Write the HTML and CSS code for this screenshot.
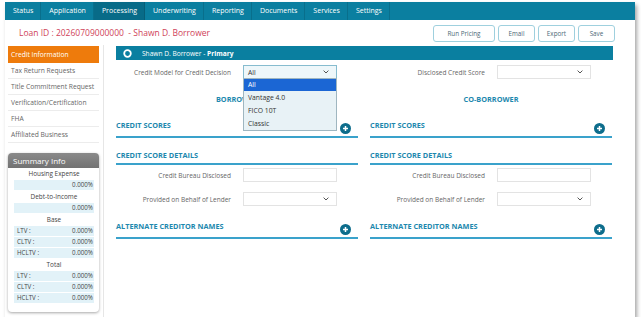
FILE: index.html
```html
<!DOCTYPE html>
<html lang="en">
    <head>
        <meta charset="UTF-8" />
        <title>Credit Information</title>
        <link rel="stylesheet" href="styles.css">
    </head>
    <body>
        <div class="window">
            <nav class="tabs">
                <a class="tab">Status</a>
                <a class="tab">Application</a>
                <a class="tab active">Processing</a>
                <a class="tab">Underwriting</a>
                <a class="tab">Reporting</a>
                <a class="tab">Documents</a>
                <a class="tab">Services</a>
                <a class="tab">Settings</a>
            </nav>
            <div class="topline">
                <div class="loan-id">Loan ID : 20260709000000&nbsp; - Shawn D. Borrower</div>
                <div class="actions">
                    <button class="btn btn-wide">Run Pricing</button>
                    <button class="btn">Email</button>
                    <button class="btn">Export</button>
                    <button class="btn">Save</button>
                </div>
            </div>
            <div class="content">
                <aside class="sidebar">
                    <ul class="menu">
                        <li class="current">Credit Information</li>
                        <li>Tax Return Requests</li>
                        <li>Title Commitment Request</li>
                        <li>Verification/Certification</li>
                        <li>FHA</li>
                        <li>Affiliated Business</li>
                    </ul>
                    <div class="summary">
                        <div class="summary-head">Summary Info</div>
                        <div class="summary-body">
                            <div class="s-title">Housing Expense</div>
                            <div class="s-row"><span></span><span>0.000%</span></div>
                            <div class="s-title">Debt-to-Income</div>
                            <div class="s-row"><span></span><span>0.000%</span></div>
                            <div class="s-title">Base</div>
                            <div class="s-row"><span>LTV :</span><span>0.000%</span></div>
                            <div class="s-row"><span>CLTV :</span><span>0.000%</span></div>
                            <div class="s-row"><span>HCLTV :</span><span>0.000%</span></div>
                            <div class="s-title">Total</div>
                            <div class="s-row"><span>LTV :</span><span>0.000%</span></div>
                            <div class="s-row"><span>CLTV :</span><span>0.000%</span></div>
                            <div class="s-row"><span>HCLTV :</span><span>0.000%</span></div>
                        </div>
                    </div>
                </aside>
                <main class="main">
                    <div class="borrower-bar">
                        <svg class="radio" width="9" height="9" viewBox="0 0 9 9"><circle cx="4.5" cy="4.5" r="3.3" fill="none" stroke="#fff" stroke-width="1.8"/></svg>
                        <span>Shawn D. Borrower - <b>Primary</b></span>
                    </div>
                    <div class="cols">
                        <div class="col">
                            <div class="field">
                                <div class="label">Credit Model for Credit Decision</div>
                                <div class="control open">
                                    <div class="select focus">
                                        <span>All</span>
                                        <svg width="6" height="4" viewBox="0 0 6 4"><path d="M0.6 0.6L3 3L5.4 0.6" fill="none" stroke="#555" stroke-width="1"/></svg>
                                    </div>
                                    <ul class="dropdown">
                                        <li class="hl">All</li>
                                        <li>Vantage 4.0</li>
                                        <li>FICO 10T</li>
                                        <li>Classic</li>
                                    </ul>
                                </div>
                            </div>
                            <div class="col-title">BORROWER</div>
                            <div class="sec-head with-icon">
                                <span>CREDIT SCORES</span>
                                <svg class="plus" width="11" height="11" viewBox="0 0 11 11"><circle cx="5.5" cy="5.5" r="5.5" fill="#0d6d8c"/><path d="M5.5 3v5M3 5.5h5" stroke="#fff" stroke-width="1.5"/></svg>
                            </div>
                            <div class="sec-head">
                                <span>CREDIT SCORE DETAILS</span>
                            </div>
                            <div class="fields">
                                <div class="field">
                                    <div class="label">Credit Bureau Disclosed</div>
                                    <div class="control"><div class="select"></div></div>
                                </div>
                                <div class="field">
                                    <div class="label">Provided on Behalf of Lender</div>
                                    <div class="control">
                                        <div class="select">
                                            <span></span>
                                            <svg width="6" height="4" viewBox="0 0 6 4"><path d="M0.6 0.6L3 3L5.4 0.6" fill="none" stroke="#555" stroke-width="1"/></svg>
                                        </div>
                                    </div>
                                </div>
                            </div>
                            <div class="sec-head with-icon alt">
                                <span>ALTERNATE CREDITOR NAMES</span>
                                <svg class="plus" width="11" height="11" viewBox="0 0 11 11"><circle cx="5.5" cy="5.5" r="5.5" fill="#0d6d8c"/><path d="M5.5 3v5M3 5.5h5" stroke="#fff" stroke-width="1.5"/></svg>
                            </div>
                        </div>
                        <div class="col">
                            <div class="field">
                                <div class="label">Disclosed Credit Score</div>
                                <div class="control">
                                    <div class="select">
                                        <span></span>
                                        <svg width="6" height="4" viewBox="0 0 6 4"><path d="M0.6 0.6L3 3L5.4 0.6" fill="none" stroke="#555" stroke-width="1"/></svg>
                                    </div>
                                </div>
                            </div>
                            <div class="col-title">CO-BORROWER</div>
                            <div class="sec-head with-icon">
                                <span>CREDIT SCORES</span>
                                <svg class="plus" width="11" height="11" viewBox="0 0 11 11"><circle cx="5.5" cy="5.5" r="5.5" fill="#0d6d8c"/><path d="M5.5 3v5M3 5.5h5" stroke="#fff" stroke-width="1.5"/></svg>
                            </div>
                            <div class="sec-head">
                                <span>CREDIT SCORE DETAILS</span>
                            </div>
                            <div class="fields">
                                <div class="field">
                                    <div class="label">Credit Bureau Disclosed</div>
                                    <div class="control"><div class="select"></div></div>
                                </div>
                                <div class="field">
                                    <div class="label">Provided on Behalf of Lender</div>
                                    <div class="control">
                                        <div class="select">
                                            <span></span>
                                            <svg width="6" height="4" viewBox="0 0 6 4"><path d="M0.6 0.6L3 3L5.4 0.6" fill="none" stroke="#555" stroke-width="1"/></svg>
                                        </div>
                                    </div>
                                </div>
                            </div>
                            <div class="sec-head with-icon alt">
                                <span>ALTERNATE CREDITOR NAMES</span>
                                <svg class="plus" width="11" height="11" viewBox="0 0 11 11"><circle cx="5.5" cy="5.5" r="5.5" fill="#0d6d8c"/><path d="M5.5 3v5M3 5.5h5" stroke="#fff" stroke-width="1.5"/></svg>
                            </div>
                        </div>
                    </div>
                </main>
            </div>
        </div>
    </body>
</html>
```
FILE: styles.css
```css
body {
    margin: 0;
    background-color: #fff;
    font-family: "Open Sans", "Liberation Sans", sans-serif;
}
.window {
    width: 630px;
    height: 315px;
    margin: 2px 0 0 5px;
    background-color: #fff;
    box-shadow: 2px 3px 4px rgba(0, 0, 0, 0.35);
    display: flex;
    flex-direction: column;
    overflow: hidden;
}
.tabs {
    display: flex;
    height: 18px;
    background-color: #0b7fa0;
}
.tab {
    padding: 0 7px 0 8px;
    line-height: 18px;
    font-size: 7px;
    color: #fff;
    border-right: 1px solid rgba(0, 0, 0, 0.12);
}
.tab.active {
    background-color: #086b88;
}
.topline {
    display: flex;
    justify-content: space-between;
    align-items: center;
    height: 25px;
    padding: 0 20px 0 14px;
}
.loan-id {
    font-size: 8.5px;
    color: #cf3f5a;
}
.actions {
    display: flex;
    gap: 3px;
    padding-top: 1px;
}
.btn {
    width: 37px;
    height: 17px;
    padding: 0;
    border: 1px solid #9fd0de;
    border-radius: 3px;
    background-color: #fff;
    font-family: inherit;
    font-size: 6.3px;
    color: #4d6977;
}
.btn-wide {
    width: 62px;
}
.content {
    display: flex;
    flex: 1;
}
.sidebar {
    width: 91px;
    padding: 1px 4px 0 3px;
    border-right: 1px solid #e6e6e6;
}
.menu {
    list-style: none;
    margin: 0;
    padding: 0;
}
.menu li {
    height: 15px;
    line-height: 15px;
    padding-left: 3px;
    font-size: 6.7px;
    color: #666;
    border-bottom: 1px solid #ececec;
}
.menu li.current {
    height: 17px;
    line-height: 17px;
    background-color: #ee7b0c;
    color: #fff;
    border-bottom: none;
}
.summary {
    margin-top: 10px;
    border-radius: 4px;
    box-shadow: 0 1px 3px rgba(0, 0, 0, 0.35);
    background-color: #fff;
    padding-bottom: 8px;
}
.summary-head {
    height: 15px;
    line-height: 15px;
    padding-left: 5px;
    border-radius: 4px 4px 0 0;
    background: linear-gradient(#8a8a8a, #727272);
    color: #fff;
    font-size: 8px;
}
.summary-body {
    padding: 0 5px 0 6px;
}
.s-title {
    height: 12px;
    line-height: 12px;
    text-align: center;
    font-size: 6.4px;
    color: #444;
}
.s-row {
    display: flex;
    justify-content: space-between;
    height: 10px;
    line-height: 10px;
    margin-bottom: 1px;
    padding: 0 1px 0 3px;
    background-color: #e2f2f8;
    font-size: 6.2px;
    color: #444;
}
.main {
    flex: 1;
    padding: 1px 22px 0 12px;
}
.borrower-bar {
    display: flex;
    align-items: center;
    height: 14px;
    padding-left: 7px;
    background-color: #0a7fa0;
    color: #fff;
    font-size: 6.6px;
}
.radio {
    margin-right: 10px;
}
.cols {
    display: grid;
    grid-template-columns: 242px 242px;
    column-gap: 12px;
}
.field {
    display: flex;
    align-items: center;
    margin-top: 5px;
}
.label {
    width: 115px;
    margin-right: 12px;
    text-align: right;
    font-size: 6.5px;
    color: #666;
}
.control {
    position: relative;
    width: 94px;
}
.select {
    display: flex;
    justify-content: space-between;
    align-items: center;
    height: 14px;
    padding: 0 7px 0 4px;
    border: 1px solid #e3e3e3;
    box-sizing: border-box;
    background-color: #fff;
    font-size: 6.8px;
    color: #333;
}
.select.focus {
    border-color: #86bccf;
    background-color: #eef7fa;
}
.dropdown {
    position: absolute;
    top: 13px;
    left: 0;
    width: 94px;
    margin: 0;
    padding: 0;
    list-style: none;
    box-sizing: border-box;
    border: 1px solid #9fb6c0;
    background-color: #e8f2f6;
    z-index: 10;
}
.dropdown li {
    height: 13px;
    line-height: 13px;
    padding-left: 4px;
    font-size: 6.8px;
    color: #333;
}
.dropdown li.hl {
    height: 12px;
    line-height: 12px;
    background-color: #1b66d4;
    color: #fff;
}
.col-title {
    margin-top: 14px;
    line-height: 12px;
    text-align: center;
    font-size: 7.3px;
    font-weight: bold;
    color: #1d88ae;
}
.sec-head {
    display: flex;
    justify-content: space-between;
    align-items: flex-start;
    margin-top: 11px;
    padding-bottom: 2px;
    border-bottom: 2px solid #3aa2cb;
    line-height: 12px;
    font-size: 7.3px;
    font-weight: bold;
    color: #1d88ae;
}
.sec-head.with-icon {
    margin-top: 14px;
    padding-right: 7px;
}
.sec-head.alt {
    margin-top: 14px;
}
.plus {
    margin-top: 4px;
}
.fields .field {
    margin-top: 3px;
}
.fields .field + .field {
    margin-top: 10px;
}
```
